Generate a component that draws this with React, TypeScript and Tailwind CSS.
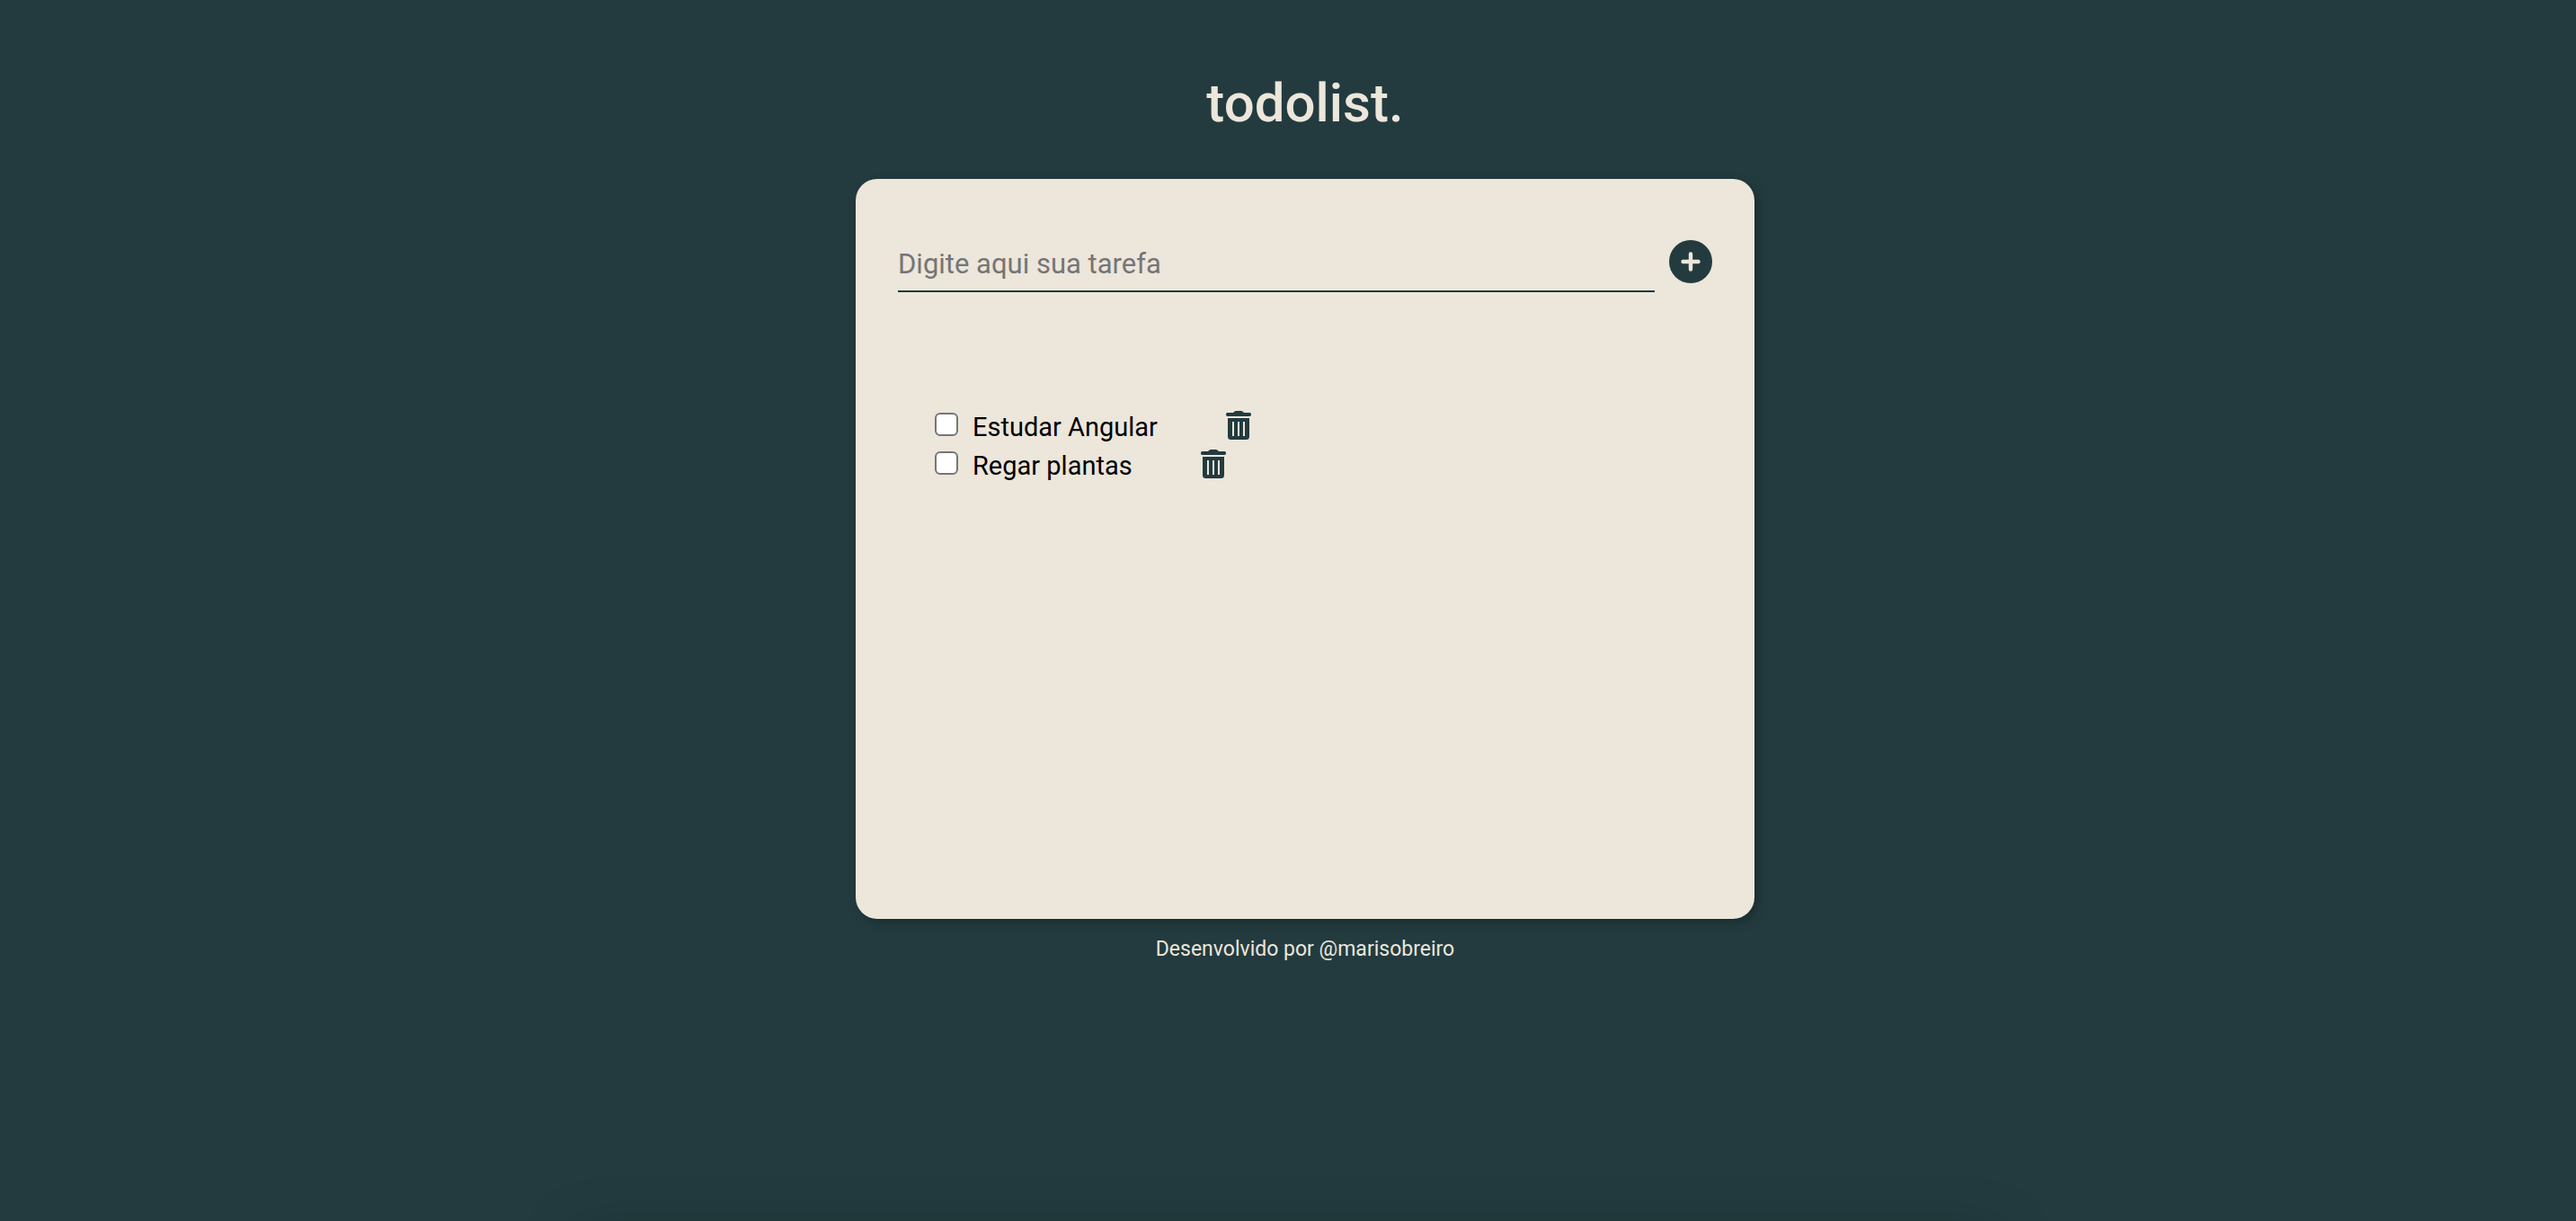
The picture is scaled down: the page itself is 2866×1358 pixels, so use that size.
import { useState } from "react";

type Task = { id: number; name: string; done: boolean };

const initialTasks: Task[] = [
  { id: 1, name: "Estudar Angular", done: false },
  { id: 2, name: "Regar plantas", done: false },
];

function PlusIcon() {
  return (
    <svg viewBox="0 0 48 48" className="size-12" aria-hidden="true">
      <circle cx="24" cy="24" r="24" fill="#233b3f" />
      <path d="M24 15.5v17M15.5 24h17" stroke="#ece6db" strokeWidth="4.4" strokeLinecap="round" />
    </svg>
  );
}

function TrashIcon() {
  return (
    <svg viewBox="0 0 28 32" className="h-8 w-7" fill="#233b3f" aria-hidden="true">
      <path d="M1.500 2H8l1.600-1.500Q10.200 0 11 0h6q.8 0 1.400.5L20 2h6.500Q28 2 28 4t-1.500 2h-25Q0 6 0 4t1.500-2Z" />
      <path
        fillRule="evenodd"
        d="M2 8h24v20.500q0 3.500-3.500 3.500h-17Q2 32 2 28.500ZM7 12v16h2V12ZM13 12v16h2V12ZM19 12v16h2V12Z"
      />
    </svg>
  );
}

export default function App() {
  const [tasks, setTasks] = useState(initialTasks);
  const [draft, setDraft] = useState("");

  const add = () => {
    if (!draft.trim()) return;
    setTasks([...tasks, { id: Date.now(), name: draft.trim(), done: false }]);
    setDraft("");
  };

  return (
    <div className="relative flex min-h-screen flex-col items-center overflow-hidden bg-[#233b3f] pt-20 pl-[38px] font-['Roboto',sans-serif]">
      <h1 className="text-[60px] leading-[70px] font-medium text-[#ece6db]">todolist.</h1>

      <main className="mt-[49px] min-h-[823px] w-full max-w-[1000px] rounded-3xl bg-[#ece6db] px-[47px] pt-[68px] shadow-[4px_4px_12px_rgba(0,0,0,0.25)]">
        <form
          className="flex items-start gap-4"
          onSubmit={(e) => {
            e.preventDefault();
            add();
          }}
        >
          <input
            type="text"
            aria-label="Digite aqui sua tarefa"
            placeholder="Digite aqui sua tarefa"
            value={draft}
            onChange={(e) => setDraft(e.target.value)}
            className="h-[58px] min-w-0 flex-1 border-b-2 border-[#233b3f] bg-transparent pb-1 text-[31px] text-black outline-none placeholder:text-[#757575]"
          />
          <button type="submit" aria-label="Adicionar tarefa">
            <PlusIcon />
          </button>
        </form>

        <ul className="mt-[130px] pl-[41px]">
          {tasks.map((task) => (
            <li key={task.id} className="flex h-[43px] items-start">
              <input
                id={`task-${task.id}`}
                type="checkbox"
                checked={task.done}
                onChange={() =>
                  setTasks(tasks.map((t) => (t.id === task.id ? { ...t, done: !t.done } : t)))
                }
                className="mt-1 size-[26px] appearance-none rounded-md border-2 border-[#767676] bg-white checked:bg-[#233b3f]"
              />
              <label htmlFor={`task-${task.id}`} className="ml-4 text-[29px] leading-10 text-black">
                {task.name}
              </label>
              <button
                type="button"
                aria-label={`Remover ${task.name}`}
                onClick={() => setTasks(tasks.filter((t) => t.id !== task.id))}
                className="mt-0.5 ml-19"
              >
                <TrashIcon />
              </button>
            </li>
          ))}
        </ul>
      </main>

      <footer className="mt-4 text-[23px] leading-9 text-[#ece6db]">Desenvolvido por @marisobreiro</footer>

      <div className="pointer-events-none absolute inset-x-[22%] -bottom-12 h-10 rounded-full shadow-[0_0_60px_rgba(0,0,0,0.2)]" />
    </div>
  );
}
